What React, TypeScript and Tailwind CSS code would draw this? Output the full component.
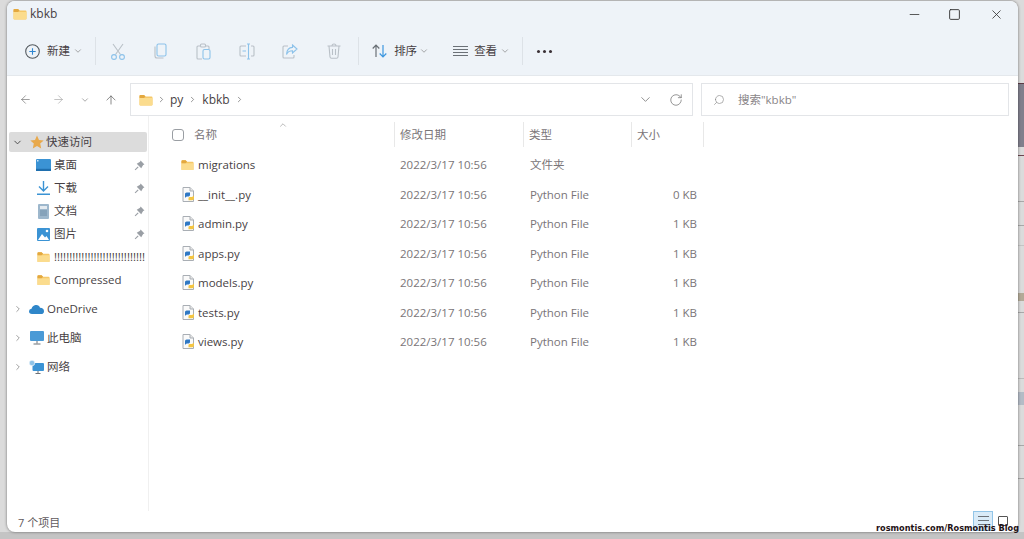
import { ArrowLeft, ArrowRight, ArrowUp, ChevronDown, ChevronRight, Minus, RotateCw, Search, Square, X } from 'lucide-react';

const font = { fontFamily: '"Open Sans", "Noto Sans CJK SC", sans-serif' };

function Folder({ className = 'w-[14px] h-[12px]' }: { className?: string }) {
  return (
    <svg viewBox="0 0 14 12" className={className}>
      <path d="M0.5 2 Q0.5 1 1.5 1 H5 L6.5 2.5 H12.5 Q13.5 2.5 13.5 3.5 V10.5 Q13.5 11.5 12.5 11.5 H1.5 Q0.5 11.5 0.5 10.5 Z" fill="#f5c869" />
      <path d="M0.5 4 H13.5 V10.5 Q13.5 11.5 12.5 11.5 H1.5 Q0.5 11.5 0.5 10.5 Z" fill="#fbdc8e" />
      <path d="M0.5 2 Q0.5 1 1.5 1 H5 L6.5 2.5 L5 4 H0.5 Z" fill="#e3a83f" />
    </svg>
  );
}

function PyFile() {
  return (
    <svg viewBox="0 0 12 15" className="w-[12px] h-[15px]">
      <path d="M1 .5 H8 L11.5 4 V14.5 H1 Z" fill="#fafafa" stroke="#a9aeb4" />
      <path d="M8 .5 V4 H11.5" fill="#e6e6e6" stroke="#a9aeb4" />
      <path d="M3 11 V7 Q3 5.5 4.6 5.5 H8 V8 Q8 9.4 6.6 9.4 H5 Q3.7 9.4 3 11 Z" fill="#2f78c4" />
      <path d="M12 8.5 V11.5 Q12 13.2 10.2 13.2 H6.5 V11 Q6.5 9.9 7.8 9.9 H9.8 Q11.2 9.9 12 8.5 Z" fill="#f4c542" />
    </svg>
  );
}

function Scissors() {
  return (
    <svg viewBox="0 0 16 17" className="w-[16px] h-[17px]" fill="none" strokeWidth="1.1">
      <path d="M3 1 L10.5 11.5 M13 1 L5.5 11.5" stroke="#b9c0c7" />
      <circle cx="4" cy="14" r="2.4" stroke="#8cc2ea" />
      <circle cx="12" cy="14" r="2.4" stroke="#8cc2ea" />
    </svg>
  );
}

function CopyIcon() {
  return (
    <svg viewBox="0 0 13 16" className="w-[13px] h-[16px]" fill="none" strokeWidth="1.1">
      <rect x="3" y="1" width="9" height="12" rx="1.5" stroke="#8cc2ea" fill="#eef3f8" />
      <path d="M1 3.5 V13 Q1 15 3 15 H9.5" stroke="#b9c0c7" />
    </svg>
  );
}

function PasteIcon() {
  return (
    <svg viewBox="0 0 15 17" className="w-[15px] h-[17px]" fill="none" strokeWidth="1.1">
      <path d="M4 3 H2 Q1 3 1 4 V15 Q1 16 2 16 H6 M10 3 H12 Q13 3 13 4 V6" stroke="#b9c0c7" />
      <rect x="4.5" y="1" width="5" height="3" rx="1" stroke="#b9c0c7" />
      <rect x="7" y="6.5" width="7" height="9.5" rx="1.5" stroke="#8cc2ea" />
    </svg>
  );
}

function RenameIcon() {
  return (
    <svg viewBox="0 0 16 17" className="w-[16px] h-[17px]" fill="none" strokeWidth="1.1">
      <path d="M7 3 H2 Q1 3 1 4 V12 Q1 13 2 13 H7 M12 3 H14 Q15 3 15 4 V12 Q15 13 14 13 H12" stroke="#b9c0c7" />
      <path d="M8 1 H11 M9.5 1 V16 M8 16 H11 M3.5 8 H7" stroke="#8cc2ea" />
    </svg>
  );
}

function ShareIcon() {
  return (
    <svg viewBox="0 0 16 15" className="w-[16px] h-[15px]" fill="none" strokeWidth="1.1">
      <path d="M6 2 H2 Q1 2 1 3 V13 Q1 14 2 14 H11 Q12 14 12 13 V11" stroke="#b9c0c7" />
      <path d="M10.5 1 L15 5 L10.5 9 V6.8 Q6 6.8 4.5 10.5 Q5 3.5 10.5 3.4 Z" stroke="#8cc2ea" />
    </svg>
  );
}

function TrashIcon() {
  return (
    <svg viewBox="0 0 14 16" className="w-[14px] h-[16px]" fill="none" stroke="#b9c0c7" strokeWidth="1.1">
      <path d="M.5 3 H13.5 M5 3 Q5 1 7 1 Q9 1 9 3 M2 3 L3 14 Q3.2 15.2 4.4 15.2 H9.6 Q10.8 15.2 11 14 L12 3 M5.5 6 V12 M8.5 6 V12" />
    </svg>
  );
}

function SortIcon() {
  return (
    <svg viewBox="0 0 15 14" className="w-[15px] h-[14px]" fill="none" strokeWidth="1.2">
      <path d="M4 13 V1.5 M.7 4.5 L4 1 L7.3 4.5" stroke="#6b7177" />
      <path d="M11 1 V12.5 M7.7 9.5 L11 13 L14.3 9.5" stroke="#3d97df" />
    </svg>
  );
}

function ViewIcon() {
  return (
    <svg viewBox="0 0 15 10" className="w-[15px] h-[10px]" stroke="#6b7177">
      <path d="M0 .5 H15 M0 3.5 H15 M0 6.5 H15 M0 9.5 H15" />
    </svg>
  );
}

function ListIcon() {
  return (
    <svg viewBox="0 0 11 9" className="w-[11px] h-[9px]" stroke="#6b7177">
      <path d="M0 .5 H11 M0 4.5 H11 M0 8.5 H11" />
    </svg>
  );
}

function NewIcon() {
  return (
    <svg viewBox="0 0 15 15" className="w-[15px] h-[15px]" fill="none" strokeWidth="1.1">
      <circle cx="7.5" cy="7.5" r="6.8" stroke="#555b60" />
      <path d="M7.5 4.3 V10.7 M4.3 7.5 H10.7" stroke="#2f86d0" />
    </svg>
  );
}

function Star() {
  return (
    <svg viewBox="0 0 14 14" className="w-[14px] h-[14px]">
      <path d="M7 .5 L9 5 L13.7 5.4 L10.2 8.6 L11.2 13.5 L7 11 L2.8 13.5 L3.8 8.6 L.3 5.4 L5 5 Z" fill="#e8a94c" />
    </svg>
  );
}

function Pin() {
  return (
    <svg viewBox="0 0 10 10" className="w-[11px] h-[11px]" fill="#9a9fa5">
      <path d="M6 .5 L9.5 4 L8.3 4.5 L6.6 7.5 L2.5 3.4 L5.5 1.7 Z" />
      <path d="M3.8 6.2 L1 9" stroke="#9a9fa5" />
    </svg>
  );
}

function Desktop() {
  return (
    <svg viewBox="0 0 15 12" className="w-[15px] h-[12px]">
      <rect x="0" y="0" width="15" height="12" rx="1" fill="#3b93d4" />
      <rect x="0" y="9.8" width="15" height="2.2" fill="#1f6fae" />
      <rect x="1" y="1" width="1.5" height="1.5" fill="#cfe8fa" />
    </svg>
  );
}

function Download() {
  return (
    <svg viewBox="0 0 13 14" className="w-[13px] h-[14px]" fill="none" stroke="#3b93d4" strokeWidth="1.4">
      <path d="M6.5 0 V9.5 M2 5.5 L6.5 10 L11 5.5 M0 13.2 H13" />
    </svg>
  );
}

function Docs() {
  return (
    <svg viewBox="0 0 11 15" className="w-[11px] h-[15px]">
      <rect width="11" height="15" rx="1" fill="#9db7cc" />
      <rect x="2" y="2" width="7" height="3" fill="#e3eaf0" />
      <path d="M2 7 H9 M2 9 H9 M2 11 H9" stroke="#6f8ea8" />
    </svg>
  );
}

function Pictures() {
  return (
    <svg viewBox="0 0 13 13" className="w-[13px] h-[13px]">
      <rect width="13" height="13" rx="1" fill="#3b93d4" />
      <path d="M1 12 L5 6 L8 9.5 L9.5 8 L12 12 Z" fill="#fff" />
      <circle cx="10" cy="3" r="1.3" fill="#fff" />
    </svg>
  );
}

function Cloud() {
  return (
    <svg viewBox="0 0 15 10" className="w-[15px] h-[10px]">
      <path d="M3 10 Q0 10 0 7.3 Q0 5 2.5 4.8 Q3.5 1.5 6.5 1 Q10 .5 11 3.8 Q15 4 15 7.2 Q15 10 12 10 Z" fill="#2f86c9" />
    </svg>
  );
}

function Computer() {
  return (
    <svg viewBox="0 0 14 14" className="w-[14px] h-[14px]">
      <rect width="14" height="10" rx="1" fill="#4a9ad6" />
      <path d="M7 10 V12.5 M3.5 13 H10.5" stroke="#6b7177" />
    </svg>
  );
}

function Network() {
  return (
    <svg viewBox="0 0 15 14" className="w-[15px] h-[14px]">
      <rect x="3.5" y="3" width="11.5" height="8" rx="1" fill="#3b93d4" />
      <circle cx="3" cy="3" r="2.8" fill="#8fc3e8" stroke="#fff" strokeWidth=".6" />
      <path d="M9 11 V13.5 M6.5 13.5 H11.5" stroke="#6b7177" />
    </svg>
  );
}

function Toolbar() {
  const tools = [<Scissors />, <CopyIcon />, <PasteIcon />, <RenameIcon />, <ShareIcon />, <TrashIcon />];
  return (
    <div className="flex items-center h-[28px] mt-[10px] pl-[18px] text-[11.5px] text-[#473f44]">
      <NewIcon />
      <span className="ml-[7px]">新建</span>
      <ChevronDown className="ml-[3px] size-[10px] text-[#777]" strokeWidth={1.5} />
      <div className="ml-[12px] w-px h-[28px] bg-[#dde2e7]" />
      <div className="flex">
        {tools.map((t, i) => (
          <div key={i} className="w-[43.2px] flex justify-center items-center">{t}</div>
        ))}
      </div>
      <div className="ml-[3px] w-px h-[28px] bg-[#dde2e7]" />
      <div className="ml-[13px]"><SortIcon /></div>
      <span className="ml-[7px]">排序</span>
      <ChevronDown className="ml-[2px] size-[10px] text-[#777]" strokeWidth={1.5} />
      <div className="ml-[24px]"><ViewIcon /></div>
      <span className="ml-[6px]">查看</span>
      <ChevronDown className="ml-[3px] size-[10px] text-[#777]" strokeWidth={1.5} />
      <div className="ml-[12px] w-px h-[28px] bg-[#dde2e7]" />
      <div className="ml-[14px] flex gap-[3px]">
        <div className="size-[3px] rounded-full bg-[#3a3035]" />
        <div className="size-[3px] rounded-full bg-[#3a3035]" />
        <div className="size-[3px] rounded-full bg-[#3a3035]" />
      </div>
    </div>
  );
}

function AddressBar() {
  return (
    <div className="flex items-center h-[33px] mt-[7px] text-[12px] text-[#473f44]">
      <ArrowLeft className="ml-[12px] size-[13px] text-[#777]" strokeWidth={1.3} />
      <ArrowRight className="ml-[20px] size-[13px] text-[#aaa]" strokeWidth={1.3} />
      <ChevronDown className="ml-[15px] size-[10px] text-[#777]" strokeWidth={1.5} />
      <ArrowUp className="ml-[14px] size-[14px] text-[#666]" strokeWidth={1.3} />
      <div className="ml-[12px] w-[563px] h-[33px] border border-[#e3e5e8] flex items-center">
        <div className="ml-[8px]"><Folder /></div>
        <ChevronRight className="ml-[4px] size-[9px] text-[#666]" strokeWidth={1.8} />
        <span className="ml-[4px]">py</span>
        <ChevronRight className="ml-[5px] size-[9px] text-[#666]" strokeWidth={1.8} />
        <span className="ml-[5px]">kbkb</span>
        <ChevronRight className="ml-[5px] size-[9px] text-[#666]" strokeWidth={1.8} />
        <ChevronDown className="ml-auto size-[15px] text-[#777]" strokeWidth={1.3} />
        <RotateCw className="ml-[16px] mr-[9px] size-[14px] text-[#777]" strokeWidth={1.3} />
      </div>
      <div className="ml-[8px] w-[308px] h-[33px] border border-[#e3e5e8] flex items-center text-[#8a8588] text-[11.5px]">
        <Search className="ml-[11px] size-[12px] -scale-x-100 text-[#888]" strokeWidth={1.3} />
        <span className="ml-[13px]">搜索"kbkb"</span>
      </div>
    </div>
  );
}

function Sidebar() {
  const quick = [
    { icon: <Desktop />, name: '桌面' },
    { icon: <Download />, name: '下载' },
    { icon: <Docs />, name: '文档' },
    { icon: <Pictures />, name: '图片' },
  ];
  const roots = [
    { icon: <Cloud />, name: 'OneDrive' },
    { icon: <Computer />, name: '此电脑' },
    { icon: <Network />, name: '网络' },
  ];
  return (
    <div className="w-[142px] shrink-0 border-r border-[#f0f0f0] pt-[16px] text-[11.5px] text-[#473f44]">
      <div className="ml-[2px] w-[138px] h-[20px] bg-[#dcdcdc] rounded-[2px] flex items-center">
        <ChevronDown className="ml-[3px] size-[11px] text-[#444]" strokeWidth={2} />
        <div className="ml-[7px]"><Star /></div>
        <span className="ml-[2px]">快速访问</span>
      </div>
      <div className="mt-[1.5px]">
        {quick.map(q => (
          <div key={q.name} className="h-[23px] flex items-center">
            <div className="ml-[29px] w-[15px] flex justify-center">{q.icon}</div>
            <span className="ml-[3px]">{q.name}</span>
            <div className="ml-auto mr-[3px]"><Pin /></div>
          </div>
        ))}
        <div className="h-[23px] flex items-center">
          <div className="ml-[29px] w-[15px] flex justify-center"><Folder className="w-[13px] h-[12px]" /></div>
          <span className="ml-[3px] whitespace-nowrap">!!!!!!!!!!!!!!!!!!!!!!!!!!!!!!</span>
        </div>
        <div className="h-[23px] flex items-center">
          <div className="ml-[29px] w-[15px] flex justify-center"><Folder className="w-[13px] h-[12px]" /></div>
          <span className="ml-[3px]">Compressed</span>
        </div>
      </div>
      <div className="mt-[6px] flex flex-col gap-[6px]">
        {roots.map(r => (
          <div key={r.name} className="h-[23px] flex items-center">
            <ChevronRight className="ml-[6px] size-[10px] text-[#666]" strokeWidth={1.5} />
            <div className="ml-[6px] w-[15px] flex justify-center">{r.icon}</div>
            <span className="ml-[3px]">{r.name}</span>
          </div>
        ))}
      </div>
    </div>
  );
}

function FileList() {
  const files = [
    { name: '__init__.py', size: '0 KB' },
    { name: 'admin.py', size: '1 KB' },
    { name: 'apps.py', size: '1 KB' },
    { name: 'models.py', size: '1 KB' },
    { name: 'tests.py', size: '1 KB' },
    { name: 'views.py', size: '1 KB' },
  ];
  return (
    <div className="relative flex-1 text-[11.5px] text-[#7a7578]">
      <ChevronDown className="absolute left-[129px] top-[4px] size-[10px] rotate-180 text-[#888]" strokeWidth={1.4} />
      <div className="flex h-[25px] mt-[6px]">
        <div className="w-[246px] flex items-center border-r border-[#e8e8e8]">
          <div className="ml-[23px] size-[12px] rounded-[3px] border border-[#9a9ea3]" />
          <span className="ml-[10px]">名称</span>
        </div>
        <div className="w-[129px] flex items-center border-r border-[#e8e8e8] pl-[5px]">修改日期</div>
        <div className="w-[108px] flex items-center border-r border-[#e8e8e8] pl-[5px]">类型</div>
        <div className="w-[72px] flex items-center border-r border-[#e8e8e8] pl-[5px]">大小</div>
      </div>
      <div className="mt-[3px]">
        <div className="h-[29.5px] flex items-center">
          <div className="ml-[32px] w-[13px] flex justify-center"><Folder /></div>
          <span className="ml-[4px] w-[202px] text-[#473f44]">migrations</span>
          <span className="w-[130px]">2022/3/17 10:56</span>
          <span>文件夹</span>
        </div>
        {files.map(f => (
          <div key={f.name} className="h-[29.5px] flex items-center">
            <div className="ml-[32px] w-[13px] flex justify-center"><PyFile /></div>
            <span className="ml-[4px] w-[202px] text-[#473f44]">{f.name}</span>
            <span className="w-[130px]">2022/3/17 10:56</span>
            <span className="w-[100px]">Python File</span>
            <span className="w-[67px] text-right">{f.size}</span>
          </div>
        ))}
      </div>
    </div>
  );
}

function BackgroundStrip() {
  return (
    <div className="w-[6px] shrink-0 flex flex-col">
      <div className="h-[83px]" />
      <div className="h-[1px] bg-[#5c3a44]" />
      <div className="h-[63px] bg-[#807f8c]" />
      <div className="h-[8px]" />
      <div className="h-[1px] bg-[#6d4650]" />
      <div className="h-[45px]" />
      <div className="h-[1px] bg-[#a8a8a8]" />
      <div className="h-[23px]" />
      <div className="h-[1px] bg-[#a8a8a8]" />
      <div className="h-[19px]" />
      <div className="h-[1px] bg-[#c4c4c4]" />
      <div className="h-[47px]" />
      <div className="h-[8px] bg-[#b3aa98]" />
      <div className="h-[11px]" />
      <div className="h-[1px] bg-[#a8a8a8]" />
      <div className="h-[65px]" />
      <div className="h-[1px] bg-[#bbb]" />
      <div className="h-[13px]" />
      <div className="h-[13px] bg-[#b4bcc6]" />
      <div className="h-[40px]" />
      <div className="h-[1px] bg-[#a8a8a8]" />
      <div className="h-[32px]" />
      <div className="h-[1px] bg-[#a8a8a8]" />
    </div>
  );
}

export default function App() {
  return (
    <div className="relative w-[1024px] h-[539px] overflow-hidden bg-[#dbdbdb] flex pl-[7px]" style={font}>
      <div className="absolute left-0 right-0 bottom-0 h-[7px] bg-[#c4c4c4]" />
      <div className="relative mt-px w-[1011px] h-[531px] shrink-0 rounded-[8px] overflow-hidden bg-white flex flex-col shadow-[0_0_3px_rgba(0,0,0,0.5)]">
        <div className="h-[75px] bg-[#eef3f8] border-b border-[#e4e8ec]">
          <div className="flex items-center h-[26px] text-[12px] text-[#473f44]">
            <div className="ml-[6px]"><Folder /></div>
            <span className="ml-[3px]">kbkb</span>
            <Minus className="ml-auto size-[15px] text-[#444]" strokeWidth={1.4} />
            <Square className="ml-[26px] size-[13px] text-[#333]" strokeWidth={1.7} />
            <X className="ml-[28px] mr-[14px] size-[15px] text-[#333]" strokeWidth={1.3} />
          </div>
          <Toolbar />
        </div>
        <AddressBar />
        <div className="flex flex-1 min-h-0">
          <Sidebar />
          <FileList />
        </div>
        <div className="h-[21px] flex items-center text-[11px] text-[#5f5a5d] pl-[11px]">
          <span className="mt-[3px]">7 个项目</span>
          <div className="ml-auto mr-[10px] mb-[2px] flex items-center gap-[5px]">
            <div className="size-[20px] bg-[#d9ebf8] border border-[#92c5e8] flex items-center justify-center"><ListIcon /></div>
            <div className="size-[10px] rounded-[1px] border border-[#555]" />
          </div>
        </div>
      </div>
      <BackgroundStrip />
      <div className="absolute left-[876px] top-[523px] whitespace-nowrap text-[8.2px] font-bold leading-[11px] text-[#1f1216]" style={{ fontFamily: '"DejaVu Sans", sans-serif' }}>
        rosmontis.com/Rosmontis Blog
      </div>
    </div>
  );
}
